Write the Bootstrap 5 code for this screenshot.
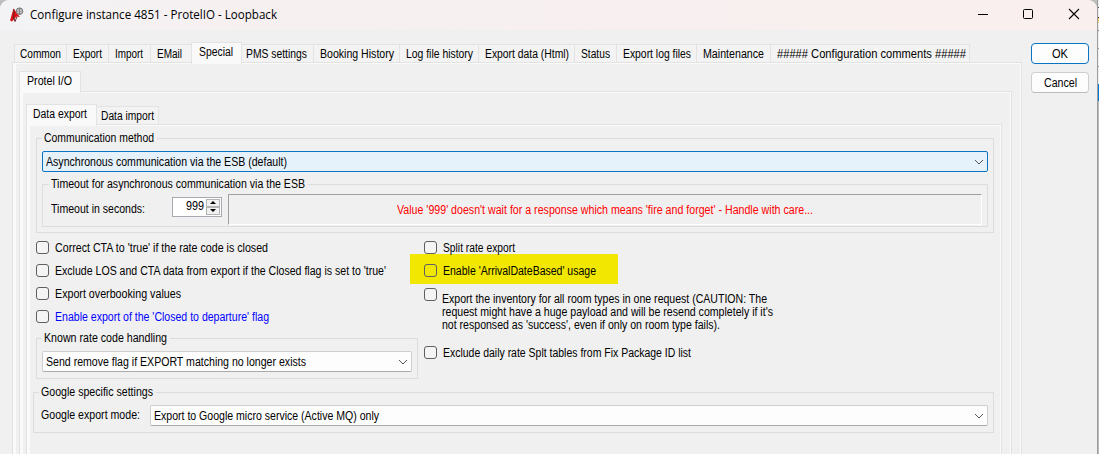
<!DOCTYPE html>
<html lang="en">
<head>
<meta charset="utf-8">
<title>Configure instance 4851 - ProtelIO - Loopback</title>
<link href="https://cdn.jsdelivr.net/npm/bootstrap@5.3.0/dist/css/bootstrap.min.css" rel="stylesheet">
<style>
body{width:1099px;height:454px;background:#bdbdbd;font:12px/13px "Liberation Sans",Arial,sans-serif;color:#000}
.win{width:1097px;height:454px;background:#f0f0f0;border-radius:9px 9px 0 0;flex:none}
.titlebar{height:30px;background:linear-gradient(90deg,#f3f3f5,#f6f0f1 20%,#f9efee);padding-left:9px}
.caption-text{font:12px/16px "Open Sans","Noto Sans",sans-serif;margin-left:6px}
.ctl{width:46px;height:30px}
.edge{width:2px;height:454px;border-left:1px solid #9c9c9c;background:linear-gradient(#eee 7px,#555 7px 8px,#eee 8px 17px,#333 17px 18px,#f0cd78 18px 23px,#eee 23px 30px,#888 30px 31px,#eee 31px 48px,#999 48px 49px,#eee 49px 66px,#999 66px 67px,#eee 67px 84px,#0078d4 84px 101px,#bbb 101px)}
.lbl{display:inline-block;white-space:pre;transform-origin:0 0}
.tabs{height:20px}
.tb{height:18px;border:1px solid #e3e3e3;border-bottom:0;border-left-width:0;background:#f3f3f3;padding:3px 0 0 6px;flex:none}
.tb.sel{height:22px;margin-bottom:-2px;background:#f9f9f9;border-left-width:1px;padding-top:3px;z-index:1}
.pane{border:1px solid #e2e2e2;border-bottom:0}
.pane-in{border:solid #fafafa;border-width:1px 1px 0 3px;height:100%}
.l1{width:1010px;margin:12px 0 0 12px}
.l1>.pane{height:392px}.l2>.pane{height:363px}.l3>.pane{height:330px}
.l2{width:993px;margin-left:3px;padding-top:7px}
.l3{width:976px;margin-left:3px;padding-top:11px}
.l1>.tabs{padding-left:2px}
.l1>.tabs>.tb:first-child{border-left-width:1px;padding-left:5px}
.l1>.tabs>.sel{margin-left:-1px;padding-left:7px}
.l2>.tabs .sel{padding-left:7px}
.group{border:1px solid #dcdcdc}
.group>.cap{display:table;height:13px;margin-top:-7px;padding:0 3px 0 2px;background:#f0f0f0;margin-left:5px}
.combo{height:21px;background:#fdfdfd;border:1px solid #cecece;border-bottom-color:#aaa;border-radius:2px;padding:0 3px}
.combo .lbl{margin-top:2px}
.combo.hot{background:#e5f1fb;border-color:#0a74c4}
.spin{width:50px;height:20px;border:1px solid #a5a9b0;background:#fff;padding:1px;margin-top:3px}
.spin b{display:block;width:14px;height:8px;background:#f0f0f0;border:1px solid #b4b4b4}
.spin svg{margin-top:1px}
.num{margin:1px 2px 0 0}
.sunk{width:754px;height:31px;border:1px solid #a0a0a0;border-right-color:#fff;border-bottom-color:#fff;color:#f00;margin-left:6px}
.sunk .lbl{margin-top:2px}
.box{width:13px;height:13px;border:1px solid #5f5f5f;border-radius:3px;background:#f4f4f4;flex:none}
.chk{height:13px;gap:6px;line-height:15px}
.leftcol{width:382px}
.hl{margin:0 0 0 -14px;width:208px;height:30px;background:#f1e700;padding:3px 0 0 14px}
.hl .box{background:transparent}
.pb{width:58px;height:21px;border:1px solid #cfcfcf;border-bottom-color:#bbb;border-radius:4px;background:#fdfdfd}
.pb.def{border-color:#0a74c4}
.pb .lbl{margin-top:1px}
.g1{width:958px;height:95px;margin:12px 0 0 6px}
.g1>.combo,.g3>.combo{margin:6px 5px 0}
.g2{width:946px;height:43px;margin:12px 5px 0}
.g2>.cap{margin-left:6px}
.row2{margin-top:3px}
.secs{margin:9px 27px 0 8px}
.opts{padding-left:6px;height:159px}
.mt8{margin-top:8px}.mt10{margin-top:10px}
.blue .lbl{color:#00f}
.g3{height:41px;margin-top:15px;width:382px}
.rightcol{margin-left:6px}
.inv{margin-top:4px;gap:5px}
.lines{padding-top:5px;height:58px}
.lines .lbl{vertical-align:top}
.g4{width:961px;height:41px;margin-left:3px}
.g4>.cap{margin-left:5px}
.grow4{margin-top:6px}
.gm{margin:4px 10px 0 7px}
.grow4>.combo{width:838px}
.side{margin:13px 0 0 9px;gap:8px}
</style>
</head>
<body class="d-flex overflow-hidden">
<div class="win overflow-hidden">
  <div class="titlebar d-flex align-items-center">
    <svg width="15" height="16" viewBox="0 0 15 16"><path d="M4.500 1.500 8.500 7 11 10 7.500 9.500 3 14.500 1 13.500Z" fill="#e01014"/><path d="M5 2 4.500 12M4.500 10 6 14.500 8 9.500" stroke="#6a2525" fill="none"/><circle cx="10.500" cy="4.200" r="3.300" fill="#d5d5d5" stroke="#777"/><path d="M7 4.200h7M10.500 1v6.500M8.300 2h4.400M8.300 6.300h4.400" stroke="#777" stroke-width=".7"/></svg>
    <span class="caption-text lbl" data-w="247">Configure instance 4851 - ProtelIO - Loopback</span>
    <div class="d-flex ms-auto">
      <svg class="ctl" viewBox="0 0 46 30"><path d="M19 14.500h10" stroke="#000"/></svg>
      <svg class="ctl" viewBox="0 0 46 30"><rect x="18.500" y="9.500" width="9" height="9" rx="1" fill="none" stroke="#000"/></svg>
      <svg class="ctl" viewBox="0 0 46 30"><path d="m18 9 10 10m0-10-10 10" stroke="#000" stroke-width="1.100" fill="none"/></svg>
    </div>
  </div>
  <div class="d-flex">
    <div class="l1">
      <div class="tabs d-flex align-items-end">
        <div class="tb" style="width:53px"><span class="lbl" data-w="41">Common</span></div>
        <div class="tb" style="width:42px"><span class="lbl" data-w="29">Export</span></div>
        <div class="tb" style="width:42px"><span class="lbl" data-w="28">Import</span></div>
        <div class="tb" style="width:41px"><span class="lbl" data-w="25">EMail</span></div>
        <div class="tb sel" style="width:51px"><span class="lbl" data-w="34">Special</span></div>
        <div class="tb" style="width:72px;padding-left:4px"><span class="lbl" data-w="61">PMS settings</span></div>
        <div class="tb" style="width:86px"><span class="lbl" data-w="74">Booking History</span></div>
        <div class="tb" style="width:79px"><span class="lbl" data-w="67">Log file history</span></div>
        <div class="tb" style="width:96px"><span class="lbl" data-w="84">Export data (Html)</span></div>
        <div class="tb" style="width:42px"><span class="lbl" data-w="29">Status</span></div>
        <div class="tb" style="width:80px"><span class="lbl" data-w="68">Export log files</span></div>
        <div class="tb" style="width:74px"><span class="lbl" data-w="61">Maintenance</span></div>
        <div class="tb" style="width:199px"><span class="lbl" data-w="189">##### Configuration comments #####</span></div>
      </div>
      <div class="pane"><div class="pane-in">
        <div class="l2">
          <div class="tabs d-flex align-items-end">
            <div class="tb sel" style="width:62px"><span class="lbl" data-w="45">Protel I/O</span></div>
          </div>
          <div class="pane"><div class="pane-in">
            <div class="l3">
              <div class="tabs d-flex align-items-end">
                <div class="tb sel" style="width:71px"><span class="lbl" data-w="54">Data export</span></div>
                <div class="tb" style="width:62px;padding-left:4px"><span class="lbl" data-w="53">Data import</span></div>
              </div>
              <div class="pane"><div class="pane-in">
                <div class="group g1">
                  <div class="cap"><span class="lbl" data-w="110">Communication method</span></div>
                  <div class="combo hot d-flex align-items-center justify-content-between"><span class="lbl" data-w="241">Asynchronous communication via the ESB (default)</span><svg width="10" height="6" viewBox="0 0 10 6"><path d="m1 1 4 4 4-4" fill="none" stroke="#555"/></svg></div>
                  <div class="group g2">
                    <div class="cap"><span class="lbl" data-w="254">Timeout for asynchronous communication via the ESB</span></div>
                    <div class="d-flex row2">
                      <span class="lbl secs" data-w="94">Timeout in seconds:</span>
                      <div class="spin d-flex justify-content-end"><span class="lbl num" data-w="18">999</span><div><b><svg class="d-block mx-auto" width="6" height="3"><path d="M0 3h6L3 0Z"/></svg></b><b><svg class="d-block mx-auto" width="6" height="3"><path d="M0 0h6L3 3Z"/></svg></b></div></div>
                      <div class="sunk d-flex align-items-center justify-content-center"><span class="lbl" data-w="416">Value '999' doesn't wait for a response which means 'fire and forget' - Handle with care...</span></div>
                    </div>
                  </div>
                </div>
                <div class="d-flex opts">
                  <div class="leftcol">
                    <div class="chk d-flex mt8"><i class="box"></i><span class="lbl" data-w="213">Correct CTA to 'true' if the rate code is closed</span></div>
                    <div class="chk d-flex mt10"><i class="box"></i><span class="lbl" data-w="331">Exclude LOS and CTA data from export if the Closed flag is set to 'true'</span></div>
                    <div class="chk d-flex mt10"><i class="box"></i><span class="lbl" data-w="126">Export overbooking values</span></div>
                    <div class="chk d-flex mt10 blue"><i class="box"></i><span class="lbl" data-w="214">Enable export of the 'Closed to departure' flag</span></div>
                    <div class="group g3">
                      <div class="cap"><span class="lbl" data-w="123">Known rate code handling</span></div>
                      <div class="combo d-flex align-items-center justify-content-between"><span class="lbl" data-w="260">Send remove flag if EXPORT matching no longer exists</span><svg width="10" height="6" viewBox="0 0 10 6"><path d="m1 1 4 4 4-4" fill="none" stroke="#555"/></svg></div>
                    </div>
                  </div>
                  <div class="rightcol">
                    <div class="chk d-flex mt8"><i class="box"></i><span class="lbl" data-w="72">Split rate export</span></div>
                    <div class="hl d-flex align-items-center"><div class="chk d-flex"><i class="box"></i><span class="lbl" data-w="153">Enable 'ArrivalDateBased' usage</span></div></div>
                    <div class="d-flex inv"><i class="box"></i><div class="lines"><span class="lbl" data-w="325">Export the inventory for all room types in one request (CAUTION: The</span><br><span class="lbl" data-w="331">request might have a huge payload and will be resend completely if it's</span><br><span class="lbl" data-w="278">not responsed as 'success', even if only on room type fails).</span></div></div>
                    <div class="chk d-flex last"><i class="box"></i><span class="lbl" data-w="248">Exclude daily rate Splt tables from Fix Package ID list</span></div>
                  </div>
                </div>
                <div class="group g4">
                  <div class="cap"><span class="lbl" data-w="112">Google specific settings</span></div>
                  <div class="d-flex grow4"><span class="lbl gm" data-w="99">Google export mode:</span>
                  <div class="combo d-flex align-items-center justify-content-between"><span class="lbl" data-w="225">Export to Google micro service (Active MQ) only</span><svg width="10" height="6" viewBox="0 0 10 6"><path d="m1 1 4 4 4-4" fill="none" stroke="#555"/></svg></div></div>
                </div>
              </div></div>
            </div>
          </div></div>
        </div>
      </div></div>
    </div>
    <div class="side d-flex flex-column">
      <div class="pb def d-flex align-items-center justify-content-center"><span class="lbl" data-w="16">OK</span></div>
      <div class="pb d-flex align-items-center justify-content-center"><span class="lbl" data-w="33">Cancel</span></div>
    </div>
  </div>
</div>
<div class="edge"></div>
<script src="https://cdn.jsdelivr.net/npm/bootstrap@5.3.0/dist/js/bootstrap.bundle.min.js"></script>
<script>
// Condense each label so that it spans the width given in data-w.
document.querySelectorAll('.lbl[data-w]').forEach(el => {
  const r = document.createRange();
  r.selectNodeContents(el);
  const natural = r.getBoundingClientRect().width;
  el.style.width = el.dataset.w + 'px';
  el.style.transform = 'scaleX(' + (el.dataset.w / natural).toFixed(4) + ')';
});
</script>
</body>
</html>
